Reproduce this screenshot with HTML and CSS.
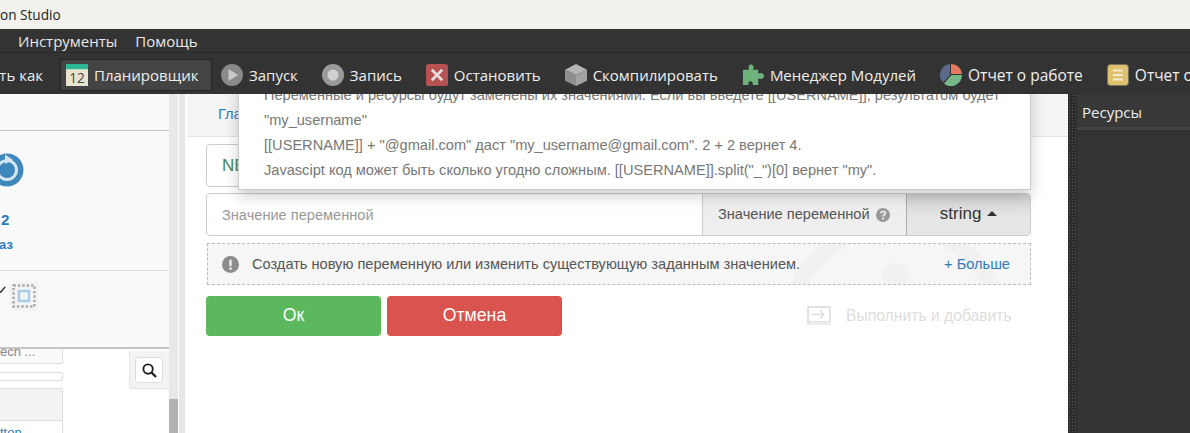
FILE: index.html
```html
<!DOCTYPE html>
<html lang="ru">
<head>
    <meta charset="UTF-8">
    <meta name="viewport" content="width=device-width, initial-scale=1.0">
    <title>Automation Studio</title>
    <link rel="stylesheet" href="styles.css">
</head>
<body>
    <div class="titlebar"><span class="app-title">on Studio</span></div>

    <div class="menubar">
        <span class="menu-item">Инструменты</span>
        <span class="menu-item">Помощь</span>
    </div>

    <div class="toolbar">
        <span class="tool tool-cut">ть как</span>
        <span class="tool tool-active">
            <svg class="tool-icon" viewBox="0 0 21 21">
                <rect width="21" height="21" fill="#e9e4cf"/>
                <rect width="21" height="5" fill="#2bb795"/>
                <text x="10.5" y="18.5" class="cal-num">12</text>
            </svg>
            Планировщик
        </span>
        <span class="tool">
            <svg class="tool-icon" viewBox="0 0 22 22">
                <circle cx="11" cy="11" r="11" fill="#8a8a8a"/>
                <path d="M7.5 5 L17 11 L7.5 17 Z" fill="#c9c9c9"/>
            </svg>
            Запуск
        </span>
        <span class="tool">
            <svg class="tool-icon" viewBox="0 0 22 22">
                <circle cx="11" cy="11" r="11" fill="#9a9a9a"/>
                <circle cx="11" cy="11" r="5.5" fill="#d2d2d2"/>
            </svg>
            Запись
        </span>
        <span class="tool">
            <svg class="tool-icon" viewBox="0 0 21 21">
                <rect width="21" height="21" rx="2.5" fill="#b85252"/>
                <path d="M5.5 5.5 L15.5 15.5 M15.5 5.5 L5.5 15.5" stroke="#e6dcdc" stroke-width="2.6"/>
            </svg>
            Остановить
        </span>
        <span class="tool">
            <svg class="tool-icon" viewBox="0 0 23 23">
                <path d="M11.5 0 L23 6 L11.5 11.5 L0 6 Z" fill="#b5b5b5"/>
                <path d="M0 6 L11.5 11.5 V23 L0 17.5 Z" fill="#8f8f8f"/>
                <path d="M23 6 L11.5 11.5 V23 L23 17.5 Z" fill="#a2a2a2"/>
            </svg>
            Скомпилировать
        </span>
        <span class="tool">
            <svg class="tool-icon" viewBox="0 0 23 23">
                <path d="M1 6 H7.5 C6 3 7.5 0.5 9.5 0.5 C11.5 0.5 13 3 11.5 6 H17 V10 C20 8.5 23 10 23 12.5 C23 15 20 16.5 17 15 V22 H11 C12 19.5 10.5 18 9 18 C7.5 18 6 19.5 7 22 H1 Z" fill="#6fb37c"/>
            </svg>
            Менеджер Модулей
        </span>
        <span class="tool tool-report">
            <svg class="tool-icon" viewBox="0 0 22 22">
                <path d="M11 10 L11 0 A11 11 0 0 1 22 10 Z" fill="#e57a60"/>
                <path d="M11.5 11 L22 11 A11 11 0 0 1 4 19.5 Z" fill="#74b886"/>
                <path d="M10 11 L3 18.5 A11 11 0 0 1 10 0 Z" fill="#5c6a8a"/>
            </svg>
            Отчет о работе
        </span>
        <span class="tool tool-report">
            <svg class="tool-icon" viewBox="0 0 22 22">
                <rect x="0.5" y="0.5" width="21" height="21" rx="3" fill="#dfc06c" stroke="#77715f"/>
                <path d="M6 6.5 H16 M6 11 H16 M6 15.5 H16" stroke="#f1ead2" stroke-width="2"/>
            </svg>
            Отчет о
        </span>
    </div>

    <div class="workspace">
        <aside class="side">
            <div class="side-back">
                <div class="side-list">
                    <div class="side-field">ech ...</div>
                    <div class="side-thin"></div>
                    <div class="side-table">
                        <div class="side-table-head"></div>
                        <div class="side-table-row">tton</div>
                    </div>
                </div>
                <div class="search-box">
                    <span class="search-btn">
                        <svg viewBox="0 0 16 16" class="search-icon">
                            <circle cx="6.5" cy="6.5" r="5" fill="none" stroke="#222" stroke-width="2"/>
                            <path d="M10 10 L15 15" stroke="#222" stroke-width="2.4"/>
                        </svg>
                    </span>
                </div>
            </div>
            <div class="side-card">
                <div class="card-top">
                    <svg class="reload-icon" viewBox="0 0 34 34">
                        <circle cx="17" cy="17" r="16.5" fill="#3f88bb"/>
                        <circle cx="17" cy="17" r="9.5" fill="#3f88bb" stroke="#d6e6f1" stroke-width="3"/>
                        <path d="M15 1.5 L23 7 L15 11 Z" fill="#d6e6f1"/>
                    </svg>
                    <div class="card-num">2</div>
                    <div class="card-link">аз</div>
                </div>
                <div class="card-bottom">
                    <svg class="check-icon" viewBox="0 0 8 8"><path d="M0 6 L2 7 L7 1" fill="none" stroke="#222" stroke-width="1.6"/></svg>
                    <svg class="select-icon" viewBox="0 0 30 30">
                        <rect width="30" height="30" fill="#f4f4f4"/>
                        <rect x="4.5" y="4.5" width="21" height="21" fill="none" stroke="#a8a8a8" stroke-width="2.4" stroke-dasharray="2.4 2"/>
                        <rect x="10" y="10" width="10" height="10" fill="#eef5fa" stroke="#a9cde6" stroke-width="2.4"/>
                    </svg>
                </div>
            </div>
            <div class="side-scroll"><div class="side-thumb"></div></div>
        </aside>
        <div class="splitter"></div>

        <main class="center">
            <div class="crumbs"><a class="crumb-link">Главная</a></div>
            <div class="form">
                <div class="name-row"><span class="name-value">NEW</span></div>
                <div class="value-row">
                    <span class="value-input">Значение переменной</span>
                    <span class="value-label">
                        Значение переменной
                        <svg class="help-icon" viewBox="0 0 14 14">
                            <circle cx="7" cy="7" r="7" fill="#999"/>
                            <path d="M4.8 5.3 C4.8 2.8 9.4 2.8 9.4 5.3 C9.4 6.9 7.1 6.7 7.1 8.5" fill="none" stroke="#f0f0f0" stroke-width="1.6"/>
                            <rect x="6.2" y="9.6" width="1.8" height="1.8" fill="#f0f0f0"/>
                        </svg>
                    </span>
                    <span class="type-btn">string <i class="caret"></i></span>
                </div>
                <div class="hint">
                    <svg class="watermark">
                        <circle cx="687" cy="90" r="108" fill="none" stroke="#f1f1f1" stroke-width="16"/>
                        <circle cx="687" cy="32" r="13" fill="#f1f1f1"/>
                    </svg>
                    <svg class="hint-icon" viewBox="0 0 17 17">
                        <circle cx="8.5" cy="8.5" r="8.5" fill="#8c8c8c"/>
                        <rect x="7.3" y="3.5" width="2.4" height="6.8" rx="1" fill="#f0f0f0"/>
                        <rect x="7.3" y="11.4" width="2.4" height="2.3" fill="#f0f0f0"/>
                    </svg>
                    <span class="hint-text">Создать новую переменную или изменить существующую заданным значением.</span>
                    <a class="hint-more">+ Больше</a>
                </div>
                <div class="actions">
                    <button class="btn btn-ok">Ок</button>
                    <button class="btn btn-cancel">Отмена</button>
                    <span class="run-add">
                        <svg class="run-icon" viewBox="0 0 24 20">
                            <rect x="1" y="1" width="22" height="15" fill="none" stroke="#e2e2e2" stroke-width="2"/>
                            <rect y="16" width="24" height="3" fill="#ececec"/>
                            <path d="M5 8.5 H17 M13 4.5 L17 8.5 L13 12.5" fill="none" stroke="#dcdcdc" stroke-width="1.4"/>
                        </svg>
                        Выполнить и добавить
                    </span>
                </div>
            </div>

            <div class="tooltip">
                <p>Переменные и ресурсы будут заменены их значениями. Если вы введете [[USERNAME]], результатом будет</p>
                <p>"my_username"</p>
                <p>[[USERNAME]] + "@gmail.com" даст "my_username@gmail.com". 2 + 2 вернет 4.</p>
                <p>Javascipt код может быть сколько угодно сложным. [[USERNAME]].split("_")[0] вернет "my".</p>
            </div>
        </main>

        <aside class="resources">
            <div class="res-grip"></div>
            <div class="res-body">
                <div class="res-head">Ресурсы</div>
            </div>
        </aside>
    </div>
</body>
</html>
```

FILE: styles.css
```css
html, body {
    margin: 0;
    padding: 0;
}
body {
    width: 1190px;
    height: 433px;
    overflow: hidden;
    display: flex;
    flex-direction: column;
    font-family: "Liberation Sans", Arial, sans-serif;
    background: #fff;
}

/* window title */
.titlebar {
    height: 29px;
    flex: none;
    background: #f3f1ee;
    font-family: "Open Sans", sans-serif;
    font-size: 13.6px;
    line-height: 29px;
    color: #222;
    overflow: hidden;
}

/* menu + toolbar */
.menubar {
    height: 24px;
    flex: none;
    display: flex;
    gap: 18px;
    padding-left: 18px;
    background: #333;
    border-bottom: 1px solid #2b2b2b;
    box-sizing: border-box;
    font-family: "Open Sans", sans-serif;
    font-size: 15px;
    line-height: 25px;
    color: #e8e8e8;
}
.toolbar {
    height: 41px;
    flex: none;
    position: relative;
    z-index: 3;
    display: flex;
    align-items: center;
    gap: 24px;
    box-sizing: border-box;
    padding-top: 2px;
    background: #333;
    font-family: "Open Sans", sans-serif;
    font-size: 15px;
    color: #efefef;
    white-space: nowrap;
    overflow: hidden;
}
.tool {
    display: flex;
    align-items: center;
    gap: 6px;
    flex: none;
}
.tool-cut {
    width: 43px;
    justify-content: flex-end;
    margin-right: -7px;
}
.tool-active {
    height: 32px;
    width: 152px;
    box-sizing: border-box;
    padding: 0 0 0 5px;
    margin-right: -15px;
    border: 1px solid #262626;
    border-radius: 3px;
    background: #444;
}
.tool-report {
    font-size: 15.5px;
}
.tool-icon {
    width: 22px;
    height: 22px;
    flex: none;
}
.cal-num {
    font-family: "Open Sans", sans-serif;
    font-size: 13px;
    text-anchor: middle;
    fill: #444;
}

/* main area */
.workspace {
    flex: 1;
    display: flex;
    min-height: 0;
}

/* left panel */
.side {
    width: 178px;
    flex: none;
    position: relative;
    overflow: hidden;
    background: #fff;
}
.splitter {
    width: 9px;
    flex: none;
    box-sizing: border-box;
    background: #e6e6e6;
    border-left: 1px solid #fff;
    border-right: 2px solid #fff;
}
.side-back {
    display: flex;
    justify-content: space-between;
    align-items: flex-start;
    padding-top: 253px;
}
.side-list {
    width: 63px;
}
.side-field {
    height: 17px;
    box-sizing: border-box;
    border: 1px solid #ddd;
    border-top: 0;
    border-left: 0;
    border-radius: 0 0 3px 0;
    font-size: 13px;
    color: #888;
    text-align: right;
    padding-right: 30px;
    line-height: 9px;
    overflow: hidden;
    white-space: nowrap;
    background: #fafafa;
}
.side-thin {
    height: 7px;
    margin-top: 8px;
    border: 1px solid #ddd;
    border-left: 0;
    border-radius: 0 3px 3px 0;
}
.side-table {
    margin-top: 7px;
    border: 1px solid #ddd;
    border-left: 0;
    border-bottom: 0;
    border-radius: 0 3px 0 0;
}
.side-table-head {
    height: 31px;
    background: #f3f3f3;
    border-bottom: 1px solid #ddd;
}
.side-table-row {
    height: 14px;
    font-size: 13px;
    line-height: 24px;
    color: #337ab7;
    overflow: hidden;
}
.search-box {
    width: 40px;
    height: 38px;
    margin-right: 9px;
    margin-top: 4px;
    box-sizing: border-box;
    padding: 6px 5px;
    background: #f3f3f3;
    border: 1px solid #e4e4e4;
    border-right: 0;
    border-top: 0;
    border-radius: 0 0 0 4px;
}
.search-btn {
    display: flex;
    align-items: center;
    justify-content: center;
    box-sizing: border-box;
    width: 28px;
    height: 26px;
    background: #fff;
    border: 1px solid #ddd;
    border-radius: 3px;
}
.search-icon {
    width: 15px;
    height: 15px;
}
.side-card {
    position: absolute;
    top: 0;
    left: 0;
    width: 169px;
    height: 255px;
    box-sizing: border-box;
    padding-top: 37px;
    background: #fafafa;
    border-bottom: 2px solid #c4c4c4;
}
.card-top {
    height: 141px;
    box-sizing: border-box;
    border-bottom: 1px solid #ddd;
    position: relative;
    border-top: 1px solid #c4c4c4;
    margin-top: -1px;
}
.reload-icon {
    position: absolute;
    top: 22px;
    left: -10px;
    width: 34px;
    height: 34px;
}
.card-num {
    position: absolute;
    top: 80px;
    left: 1px;
    font-size: 15px;
    font-weight: bold;
    color: #2a7bc2;
}
.card-link {
    position: absolute;
    top: 106px;
    left: -1px;
    font-size: 13px;
    font-weight: bold;
    color: #2a7bc2;
}
.card-bottom {
    position: relative;
    height: 60px;
}
.check-icon {
    position: absolute;
    top: 15px;
    left: -1px;
    width: 7px;
    height: 7px;
}
.select-icon {
    position: absolute;
    top: 10px;
    left: 9px;
    width: 30px;
    height: 30px;
}
.side-scroll {
    position: absolute;
    top: 0;
    right: 0;
    bottom: 0;
    width: 9px;
    background: #e8e8e8;
}
.side-thumb {
    position: absolute;
    top: 305px;
    bottom: 0;
    width: 9px;
    background: #b2b2b2;
}

/* center form */
.center {
    flex: 1;
    position: relative;
    min-width: 0;
    overflow: hidden;
    background: #fff;
}
.crumbs {
    height: 43px;
    box-sizing: border-box;
    padding: 12px 0 0 31px;
    background: #f5f5f5;
    border-bottom: 1px solid #e4e4e4;
    font-size: 14.6px;
}
.crumb-link {
    color: #337ab7;
}
.form {
    width: 825px;
    margin: 7px 0 0 19px;
    font-size: 14.6px;
}
.name-row {
    height: 43px;
    box-sizing: border-box;
    border: 1px solid #ccc;
    border-radius: 4px;
    padding-left: 15px;
    line-height: 41px;
    font-size: 17px;
}
.name-value {
    color: #4b8a5a;
}
.value-row {
    display: flex;
    height: 43px;
    margin-top: 6px;
    box-sizing: border-box;
    border: 1px solid #ccc;
    border-radius: 4px;
    line-height: 43px;
    overflow: hidden;
}
.value-input {
    flex: 1;
    padding-left: 15px;
    color: #999;
}
.value-label {
    display: flex;
    align-items: center;
    gap: 6px;
    width: 204px;
    box-sizing: border-box;
    padding-left: 15px;
    color: #555;
    background: #eee;
    border-left: 1px solid #ccc;
}
.help-icon {
    width: 14px;
    height: 14px;
}
.type-btn {
    width: 123px;
    text-align: center;
    font-size: 17px;
    line-height: 40px;
    color: #333;
    background: linear-gradient(to bottom, #d2d2d2, #e6e6e6 60%);
    border-left: 1px solid #adadad;
}
.caret {
    display: inline-block;
    vertical-align: 3px;
    margin-left: 1px;
    border-left: 5px solid transparent;
    border-right: 5px solid transparent;
    border-bottom: 5px solid #333;
}
.hint {
    position: relative;
    display: flex;
    align-items: center;
    height: 42px;
    margin: 7px 0 0 1px;
    box-sizing: border-box;
    padding: 0 20px 0 14px;
    border: 1px dashed #bbb;
    background: #f6f6f6;
    color: #555;
    overflow: hidden;
}
.watermark {
    position: absolute;
    left: 0;
    top: 0;
    width: 100%;
    height: 100%;
}
.hint-icon {
    position: relative;
    width: 17px;
    height: 17px;
    margin-right: 13px;
    flex: none;
}
.hint-text {
    position: relative;
    flex: 1;
}
.hint-more {
    position: relative;
    color: #337ab7;
}
.actions {
    display: flex;
    align-items: center;
    gap: 6px;
    margin-top: 11px;
}
.btn {
    width: 175px;
    height: 40px;
    padding: 0 0 2px;
    border: 0;
    border-radius: 4px;
    font-family: inherit;
    font-size: 17.7px;
    color: #fff;
}
.btn-ok {
    background: #5cb85c;
}
.btn-cancel {
    background: #d9534f;
}
.run-add {
    display: flex;
    align-items: center;
    gap: 15px;
    margin-left: 239px;
    font-size: 15.7px;
    color: #ddd;
}
.run-icon {
    width: 24px;
    height: 20px;
}

/* popup over the form */
.tooltip {
    position: absolute;
    z-index: 2;
    top: -11px;
    left: 51px;
    width: 793px;
    height: 107px;
    box-sizing: border-box;
    padding: 0 0 0 25px;
    background: #fff;
    border: 1px solid #ccc;
    border-top: 0;
    box-shadow: 0 6px 14px rgba(0, 0, 0, 0.2);
    font-size: 14.6px;
    line-height: 25px;
    color: #777;
    white-space: nowrap;
}
.tooltip p {
    margin: 0;
}

/* right panel */
.resources {
    width: 122px;
    flex: none;
    display: flex;
    color: #efefef;
    background: #333;
    font-family: "Open Sans", sans-serif;
    font-size: 15px;
}
.res-grip {
    width: 9px;
    flex: none;
    background-color: #2c2c2c;
    background-image: radial-gradient(circle, #555 1px, transparent 1px);
    background-size: 3px 3px;
}
.res-body {
    flex: 1;
}
.res-head {
    height: 33px;
    line-height: 37px;
    padding-left: 5px;
    background: #383838;
    border-bottom: 3px solid #444;
}
```
